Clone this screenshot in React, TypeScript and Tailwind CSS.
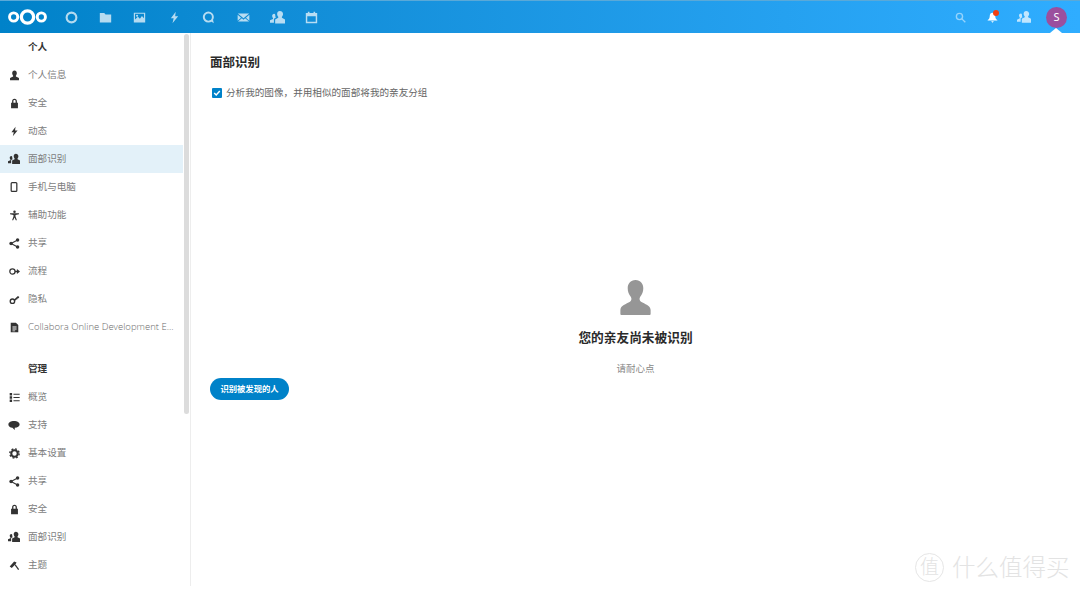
import type { ReactNode } from "react";

const Ico = ({ children, className = "w-[11px] h-[11px]" }: { children: ReactNode; className?: string }) => (
  <svg viewBox="0 0 16 16" fill="currentColor" className={className}>
    {children}
  </svg>
);

const person = "M8 .8C5.900.8 4.600 2.500 4.600 4.700c0 1.400.6 2.700 1.400 3.500v1.400L1.500 11.600V15h13v-3.400L10 9.600V8.200c.8-.8 1.400-2.100 1.400-3.500C11.400 2.500 10.100.8 8 .8z";
const contacts = "M10.500 1C8.700 1 7.600 2.400 7.600 4.200c0 1.200.5 2.300 1.200 3v1.200L5.500 10v4.500H16V10l-3.300-1.600V7.200c.7-.7 1.200-1.800 1.200-3C13.900 2.400 12.300 1 10.500 1zM4.500 4C3.200 4 2.300 5 2.300 6.400c0 .9.4 1.700.9 2.200v.9L0 11v2.500h4.200V9.400l2-1c-.3-.5-.5-1.200-.5-2C5.700 5 5.500 4 4.500 4z";
const lock = "M8 1C5.800 1 4.500 2.600 4.500 4.800V7H3v8h10V7h-1.500V4.800C11.500 2.600 10.200 1 8 1zm0 2c1.200 0 1.600.8 1.600 1.900V7H6.400V4.900C6.400 3.800 6.800 3 8 3z";
const bolt = "M9.500 1 3.500 9H7l-1.500 6L12.500 6.500H8.800z";

const IcoPerson = () => <Ico><path d={person} /></Ico>;
const IcoContacts = () => <Ico className="w-[12px] h-[12px]"><path d={contacts} /></Ico>;
const IcoLock = () => <Ico><path d={lock} /></Ico>;
const IcoBolt = () => <Ico><path d={bolt} /></Ico>;
const IcoPhone = () => (
  <Ico className="w-[10px] h-[10px]">
    <rect x="3.500" y="1" width="9" height="14" rx="1.500" fill="none" stroke="currentColor" strokeWidth="2" />
  </Ico>
);
const IcoAccess = () => (
  <Ico className="w-[11px] h-[11px]">
    <circle cx="8" cy="2.500" r="1.800" />
    <path d="M1.500 4.800h13v1.500L9.500 7.200v2.300L11.500 15h-1.600L8 11l-1.900 4H4.500l2-5.500V7.200L1.500 6.300z" />
  </Ico>
);
const IcoShare = () => (
  <Ico>
    <circle cx="12.500" cy="3" r="2.500" />
    <circle cx="3" cy="8" r="2.500" />
    <circle cx="12.500" cy="13" r="2.500" />
    <path d="M12.500 3 3 8l9.500 5" fill="none" stroke="currentColor" strokeWidth="1.600" />
  </Ico>
);
const IcoFlow = () => (
  <Ico className="w-[11px] h-[11px]">
    <circle cx="5" cy="8" r="3.800" fill="none" stroke="currentColor" strokeWidth="1.800" />
    <path d="M8.500 7h3V4.500L16 8l-4.500 3.500V9h-3z" />
  </Ico>
);
const IcoKey = () => (
  <Ico>
    <circle cx="5" cy="10.500" r="3.200" fill="none" stroke="currentColor" strokeWidth="2" />
    <path d="M7 8.500 13 3l2 1.500-1 1.500-1.500.2-.2 1.500-1.500.3L8.500 10z" />
  </Ico>
);
const IcoDoc = () => (
  <Ico className="w-[11px] h-[11px]">
    <path d="M2.500 1H10l3.500 3.500V15h-11zM5 6.500V8h6V6.500zm0 3V11h6V9.500zm0 3v1h4v-1z" fillRule="evenodd" />
  </Ico>
);
const IcoList = () => (
  <Ico>
    <path d="M1 1.500h3.500V5H1zm5.500 1h9v1.600h-9zM1 6.300h3.500v3.500H1zm5.500 1h9v1.600h-9zM1 11h3.500v3.500H1zm5.500 1h9v1.600h-9z" />
  </Ico>
);
const IcoChat = () => (
  <Ico className="w-[12px] h-[12px]">
    <path d="M8 2.500C3.800 2.500.5 4.500.5 7.200c0 2.300 2.300 4 5.400 4.500L9 14.500v-2.700c3.700-.4 6.500-2.200 6.500-4.600 0-2.700-3.300-4.700-7.500-4.700z" />
  </Ico>
);
const IcoGear = () => (
  <Ico className="w-[11px] h-[11px]">
    <circle cx="8" cy="8" r="4.700" fill="none" stroke="currentColor" strokeWidth="3" />
    <circle cx="8" cy="8" r="6.800" fill="none" stroke="currentColor" strokeWidth="2" strokeDasharray="2.700 2.640" />
  </Ico>
);
const IcoTheme = () => (
  <Ico>
    <path d="M1 9.500 7.500 2l3.500 1.500L9.500 6 4 11.500z" />
    <path d="m9 7 5 7" fill="none" stroke="currentColor" strokeWidth="1.800" />
  </Ico>
);

type NavItem = { label: string; icon: ReactNode; active?: boolean; latin?: boolean };

const personal: NavItem[] = [
  { label: "个人信息", icon: <IcoPerson /> },
  { label: "安全", icon: <IcoLock /> },
  { label: "动态", icon: <IcoBolt /> },
  { label: "面部识别", icon: <IcoContacts />, active: true },
  { label: "手机与电脑", icon: <IcoPhone /> },
  { label: "辅助功能", icon: <IcoAccess /> },
  { label: "共享", icon: <IcoShare /> },
  { label: "流程", icon: <IcoFlow /> },
  { label: "隐私", icon: <IcoKey /> },
  { label: "Collabora Online Development E...", icon: <IcoDoc />, latin: true }
];

const admin: NavItem[] = [
  { label: "概览", icon: <IcoList /> },
  { label: "支持", icon: <IcoChat /> },
  { label: "基本设置", icon: <IcoGear /> },
  { label: "共享", icon: <IcoShare /> },
  { label: "安全", icon: <IcoLock /> },
  { label: "面部识别", icon: <IcoContacts /> },
  { label: "主题", icon: <IcoTheme /> }
];

function NavRow({ item }: { item: NavItem }) {
  return (
    <div className={`flex items-center h-[28px] ${item.active ? "bg-[#e3f1f9]" : ""}`}>
      <span className="w-[28px] flex justify-center text-[#333] shrink-0">{item.icon}</span>
      <span className={`whitespace-nowrap ${item.latin ? "text-[#6a6a6a] text-[9.500px] font-light font-['Open_Sans',sans-serif]" : "text-[#7d7d7d] text-[9.600px]"}`}>
        {item.label}
      </span>
    </div>
  );
}

function NavCaption({ label }: { label: string }) {
  return (
    <div className="flex items-center h-[28px] pl-[28px] text-[9.600px] font-bold text-[#333]">{label}</div>
  );
}

function AppIcon({ children }: { children: ReactNode }) {
  return <span className="w-[34.400px] flex justify-center text-white opacity-70">{children}</span>;
}

function Header() {
  const size = "w-[13px] h-[13px]";
  return (
    <header className="relative h-[33px] shrink-0 flex items-center bg-gradient-to-r from-[#0082c9] to-[#2fadff] border-t border-[#5aa9d8]">
      <svg viewBox="0 0 40 20" className="w-[39px] h-[20px] ml-[8px] mr-[7px]">
        <g fill="none" stroke="#fff">
          <circle cx="5.800" cy="10" r="4.200" strokeWidth="3" />
          <circle cx="20" cy="10" r="6.300" strokeWidth="3.400" />
          <circle cx="34.200" cy="10" r="4.200" strokeWidth="3" />
        </g>
      </svg>
      <AppIcon>
        <Ico className={size}>
          <circle cx="8" cy="8" r="6" fill="none" stroke="currentColor" strokeWidth="2.600" />
        </Ico>
      </AppIcon>
      <AppIcon>
        <Ico className={size}>
          <path d="M1 2.500h5.500L8 4.300h7V14H1z" />
        </Ico>
      </AppIcon>
      <AppIcon>
        <Ico className={size}>
          <path d="M1 2h14v12H1zm1.500 1.500v7L6 7l2.500 2.500L11 6l2.500 3V3.500zM5 4.500a1.300 1.300 0 1 1 0 2.600 1.300 1.300 0 0 1 0-2.600z" fillRule="evenodd" />
        </Ico>
      </AppIcon>
      <AppIcon>
        <Ico className={size}>
          <path d={bolt} />
        </Ico>
      </AppIcon>
      <AppIcon>
        <Ico className={size}>
          <circle cx="7.800" cy="7.500" r="5.600" fill="none" stroke="currentColor" strokeWidth="2.400" />
          <path d="m10 12 4.500 3-1-4.500z" />
        </Ico>
      </AppIcon>
      <AppIcon>
        <Ico className={size}>
          <path d="M1 3h14L8 9zm-.2 1.500L5 8.200.8 12zm14.400 0V12L11 8.200zM6 9l2 1.700L10 9l4.800 4H1.200z" />
        </Ico>
      </AppIcon>
      <AppIcon>
        <Ico className="w-[15px] h-[15px]">
          <path d={contacts} />
        </Ico>
      </AppIcon>
      <AppIcon>
        <Ico className={size}>
          <path d="M3.500 1h2v1.500h5V1h2v1.500H15V15H1V2.500h2.500zM2.800 6.500v6.800h10.400V6.500z" fillRule="evenodd" />
        </Ico>
      </AppIcon>

      <div className="ml-auto flex items-center">
        <span className="w-[32px] flex justify-center text-white opacity-50">
          <svg viewBox="0 0 16 16" className="w-[11px] h-[11px]" fill="none" stroke="currentColor" strokeWidth="2">
            <circle cx="6.500" cy="6.500" r="4.500" />
            <path d="m10 10 5 5" />
          </svg>
        </span>
        <span className="relative w-[32px] flex justify-center text-white">
          <Ico className="w-[11px] h-[11px]">
            <path d="M8 1C5 1 4 3.500 4 6c0 3-1.500 4.500-3 5.500v1h14v-1C13.500 10.500 12 9 12 6c0-2.500-1-5-4-5zM6 13.500h4l-2 2z" />
          </Ico>
          <span className="absolute top-[-2px] left-[17px] w-[6px] h-[6px] rounded-full bg-[#f4400f]" />
        </span>
        <span className="w-[32px] flex justify-center text-white opacity-70">
          <Ico className="w-[14px] h-[14px]">
            <path d={contacts} />
          </Ico>
        </span>
        <span className="w-[21px] h-[21px] ml-[6px] mr-[13px] rounded-full bg-[#9b4f9e] text-white text-[11px] flex items-center justify-center font-['Noto_Sans',sans-serif]">
          S
        </span>
      </div>
      <span className="absolute right-[18px] bottom-0 w-0 h-0 border-x-[6px] border-x-transparent border-b-[5px] border-b-white" />
    </header>
  );
}

function Sidebar() {
  return (
    <aside className="w-[191px] shrink-0 h-full flex border-r border-[#ededed] overflow-hidden">
      <nav className="w-[183px] shrink-0">
        <NavCaption label="个人" />
        {personal.map((item) => (
          <NavRow key={item.label} item={item} />
        ))}
        <div className="h-[14px]" />
        <NavCaption label="管理" />
        {admin.map((item, i) => (
          <NavRow key={i} item={item} />
        ))}
      </nav>
      <div className="ml-px mt-[1px] w-[5px] h-[380px] rounded-[3px] bg-[#dcdcdc]" />
    </aside>
  );
}

export default function App() {
  return (
    <div className="relative w-[1080px] h-[593px] overflow-hidden bg-white flex flex-col font-['Noto_Sans','Noto_Sans_CJK_SC',sans-serif]">
      <Header />
      <div className="flex h-[553px]">
        <Sidebar />
        <main className="flex-1 min-w-0">
          <section className="pl-[19px] pt-[21px]">
            <h2 className="text-[12.500px] leading-[18px] font-bold text-[#2a2a2a]">面部识别</h2>
            <label className="mt-[14px] ml-[2px] flex items-center gap-[4px] h-[14px] text-[9.600px] text-[#666]">
              <span className="w-[10px] h-[10px] rounded-[1px] bg-[#0082c9] flex items-center justify-center">
                <svg viewBox="0 0 10 10" className="w-[8px] h-[8px]" fill="none" stroke="#fff" strokeWidth="1.800">
                  <path d="m1.500 5 2.500 2.500 4.500-5" />
                </svg>
              </span>
              分析我的图像，并用相似的面部将我的亲友分组
            </label>
          </section>
          <section className="mt-[179px] flex flex-col items-center">
            <svg viewBox="0 0 36 38" className="w-[33px] h-[37px]" fill="#969696">
              <path d="M18 0c-5.500 0-8.500 4-8.500 9 0 3.500 1.300 7 3.500 9.500 1 1.500.7 4-1 5C8 26 1.500 27.500 1.500 32.500V37c0 .6.400 1 1 1h31c.6 0 1-.4 1-1v-4.500c0-5-6.500-6.500-10.500-9-1.700-1-2-3.500-1-5 2.200-2.500 3.500-6 3.500-9.500 0-5-3-9-8.500-9z" />
            </svg>
            <h3 className="mt-[11px] text-[12.700px] leading-[20px] font-bold text-[#2a2a2a]">您的亲友尚未被识别</h3>
            <p className="mt-[16px] text-[9.500px] leading-[12px] text-[#888]">请耐心点</p>
          </section>
          <div className="pl-[19px] mt-[3px]">
            <button className="block h-[22px] w-[79px] rounded-full bg-[#0082c9] text-white text-[8.300px] font-bold">
              识别被发现的人
            </button>
          </div>
        </main>
      </div>
      {/* watermark */}
      <div className="absolute left-[915px] top-[552px] flex items-center text-[#e3e3e3] pointer-events-none">
        <span className="w-[29px] h-[29px] rounded-full border border-[#e6e6e6] flex items-center justify-center text-[19px] font-light">
          值
        </span>
        <span className="ml-[8px] text-[23.500px] leading-[30px] font-light">什么值得买</span>
      </div>
    </div>
  );
}
